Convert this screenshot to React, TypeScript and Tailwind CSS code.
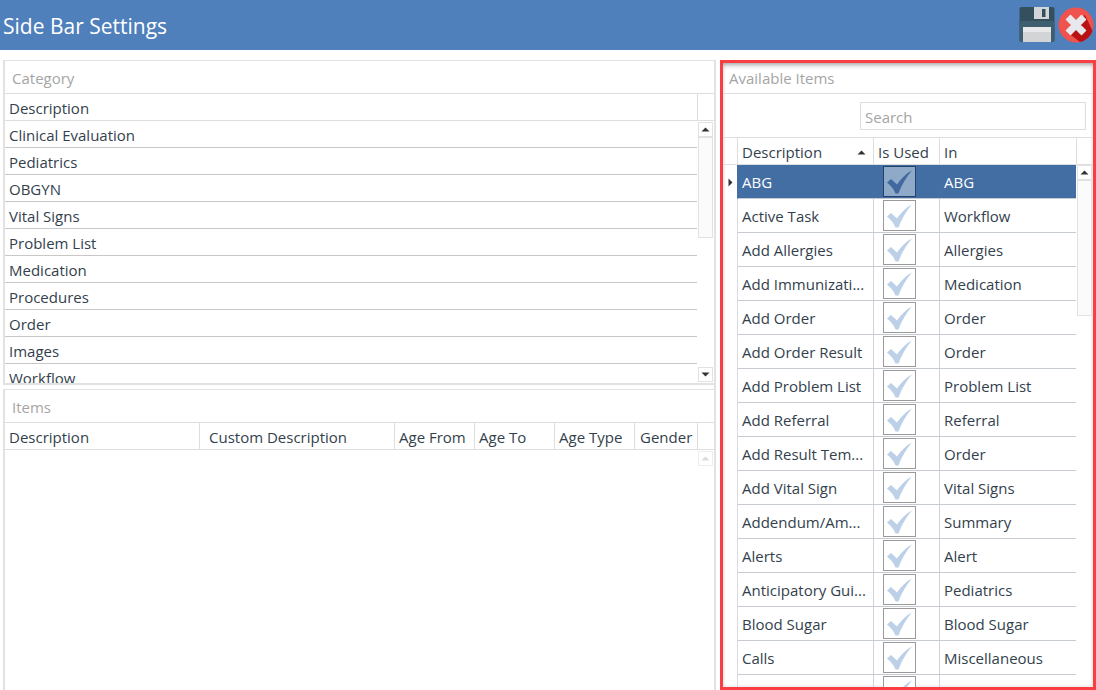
const categories = [
  'Clinical Evaluation',
  'Pediatrics',
  'OBGYN',
  'Vital Signs',
  'Problem List',
  'Medication',
  'Procedures',
  'Order',
  'Images',
  'Workflow',
]

const itemColumns = [
  { label: 'Description', width: 'w-[195px] pl-[4px]' },
  { label: 'Custom Description', width: 'w-[195px] pl-[9px]' },
  { label: 'Age From', width: 'w-[80px] pl-[4px]' },
  { label: 'Age To', width: 'w-[80px] pl-[4px]' },
  { label: 'Age Type', width: 'w-[80px] pl-[4px]' },
  { label: 'Gender', width: 'w-[63px] pl-[5px]' },
]

const available = [
  ['ABG', 'ABG'],
  ['Active Task', 'Workflow'],
  ['Add Allergies', 'Allergies'],
  ['Add Immunizati...', 'Medication'],
  ['Add Order', 'Order'],
  ['Add Order Result', 'Order'],
  ['Add Problem List', 'Problem List'],
  ['Add Referral', 'Referral'],
  ['Add Result Tem...', 'Order'],
  ['Add Vital Sign', 'Vital Signs'],
  ['Addendum/Am...', 'Summary'],
  ['Alerts', 'Alert'],
  ['Anticipatory Gui...', 'Pediatrics'],
  ['Blood Sugar', 'Blood Sugar'],
  ['Calls', 'Miscellaneous'],
  ['', ''],
]

function Arrow({ down, faded }: { down?: boolean; faded?: boolean }) {
  return (
    <svg width="9" height="5" viewBox="0 0 9 5">
      <path d={down ? 'M0.5 0.5H8.5L4.5 4.5Z' : 'M4.5 0.5L8.5 4.5H0.5Z'} fill={faded ? '#c4c4c4' : '#333333'} />
    </svg>
  )
}

function ScrollButton({ down, faded }: { down?: boolean; faded?: boolean }) {
  return (
    <div className="h-[15px] w-[15px] shrink-0 flex items-center justify-center bg-white border border-[#e2e2e2]">
      <Arrow down={down} faded={faded} />
    </div>
  )
}

function SaveIcon() {
  return (
    <svg width="36" height="36" viewBox="0 0 36 36">
      <rect x="0.5" y="0" width="35" height="35" rx="2" fill="#34505f" />
      <rect x="0.5" y="14" width="35" height="21" rx="2" fill="#3e5f70" />
      <rect x="15" y="0" width="15" height="12" fill="#d3d6d8" />
      <rect x="23" y="2" width="3.5" height="8" fill="#34505f" />
      <rect x="4" y="20" width="28" height="15" fill="#d2d4d5" />
      <rect x="4" y="20" width="28" height="5" fill="#e6e8e9" />
    </svg>
  )
}

function CloseIcon() {
  return (
    <svg width="36" height="36" viewBox="0 0 36 36">
      <circle cx="18" cy="18" r="17.5" fill="#f0524e" />
      <path d="M27 8L34.5 24A17.5 17.5 0 0 1 22 35L9 25Z" fill="#b81212" />
      <path
        d="M12.5 8.5L18 14L23.5 8.5L27.5 12.5L22 18L27.5 23.5L23.5 27.5L18 22L12.5 27.5L8.5 23.5L14 18L8.5 12.5Z"
        fill="#e6e8ee"
        stroke="#e6e8ee"
        strokeWidth="1.5"
        strokeLinejoin="round"
      />
    </svg>
  )
}

function CheckBox({ selected }: { selected: boolean }) {
  return (
    <div
      className={`w-[33px] h-[31px] flex items-center justify-center border ${
        selected ? 'bg-[#8fa9c9] border-[#24426b]' : 'bg-white border-[#9a9a9a]'
      }`}
    >
      <svg width="25" height="24" viewBox="0 0 25 24">
        <path
          d="M0 12.5L4 9L10 14.5C14 8.5 19 3.5 25 0.5C19 7.5 14.5 15 11.5 23.5H8.5C6.5 18.5 3.5 15.5 0 12.5Z"
          fill={selected ? '#41699f' : '#bcd0e8'}
        />
      </svg>
    </div>
  )
}

export default function App() {
  return (
    <div
      className="w-[1096px] h-[690px] overflow-hidden bg-white text-[#333f4d] text-[15px]"
      style={{ fontFamily: '"Open Sans", "Noto Sans", sans-serif' }}
    >
      <div className="h-[50px] bg-[#4f80bc] flex items-center justify-between pl-[3px] pr-[2px]">
        <h1 className="text-[21px] text-white pt-[3px]">Side Bar Settings</h1>
        <div className="flex items-center gap-[3px] pb-[1px]">
          <SaveIcon />
          <CloseIcon />
        </div>
      </div>

      <div className="flex pt-[10px] pl-[3px]">
        {/* left side */}
        <div className="w-[713px] shrink-0 flex flex-col gap-[4px] border-r-2 border-[#e2e2e2]">
          <section className="h-[325px] border-2 border-[#e2e2e2] border-r-0 border-t-[1px] overflow-hidden flex flex-col">
            <div className="h-[33px] shrink-0 pl-[7px] pt-[2px] flex items-center text-[#a5a5a5] border-b border-[#dedede]">Category</div>
            <div className="h-[27px] shrink-0 flex border-b border-[#dedede]">
              <div className="w-[693px] pl-[4px] pt-[2px] flex items-center border-r border-[#dedede]">Description</div>
            </div>
            <div className="flex flex-1 min-h-0">
              <div className="w-[692px] shrink-0 overflow-hidden">
                {categories.map((name) => (
                  <div key={name} className="h-[27px] pl-[4px] pt-[2px] flex items-center border-b border-[#c8c8c8]">
                    {name}
                  </div>
                ))}
              </div>
              <div className="w-[15px] ml-[1px] pt-[1px] pb-[1px] flex flex-col">
                <ScrollButton />
                <div className="h-[101px] shrink-0 bg-[#fbfbfb] border border-[#e2e2e2]" />
                <div className="flex-1" />
                <ScrollButton down />
              </div>
            </div>
          </section>

          <section className="flex-1 h-[301px] border-2 border-b-0 border-r-0 border-t-[1px] border-[#e2e2e2] flex flex-col">
            <div className="h-[33px] shrink-0 pl-[7px] pt-[2px] flex items-center text-[#a5a5a5] border-b border-[#dedede]">Items</div>
            <div className="h-[27px] shrink-0 flex border-b border-[#dedede]">
              {itemColumns.map((col) => (
                <div key={col.label} className={`${col.width} shrink-0 pt-[2px] flex items-center border-r border-[#dedede]`}>
                  {col.label}
                </div>
              ))}
            </div>
            <div className="flex justify-end pt-[1px] pr-[1px]">
              <div className="opacity-60">
                <ScrollButton faded />
              </div>
            </div>
          </section>
        </div>

        {/* available items, outlined in red in the picture */}
        <section className="ml-[4px] w-[376px] h-[630px] border-[3px] border-[#fb3e44] overflow-hidden flex flex-col shadow-[inset_0_5px_5px_-3px_rgba(0,0,0,0.3),inset_0_0_4px_rgba(0,0,0,0.15)]">
          <div className="h-[31px] shrink-0 pl-[6px] flex items-center text-[#a5a5a5] border-b border-[#dedede]">Available Items</div>
          <div className="h-[43px] shrink-0 flex items-center justify-end pr-[7px] pt-[1px]">
            <div className="w-[226px] h-[28px] pl-[4px] pt-[2px] flex items-center text-[#a5a5a5] border border-[#dedede]">Search</div>
          </div>
          <div className="h-[28px] shrink-0 flex border-y border-[#dedede]">
            <div className="w-[15px] shrink-0 border-r border-[#dedede]" />
            <div className="w-[136px] shrink-0 pl-[4px] pr-[7px] pt-[2px] flex items-center justify-between border-r border-[#dedede]">
              Description
              <Arrow />
            </div>
            <div className="w-[66px] shrink-0 pl-[4px] pt-[2px] flex items-center border-r border-[#dedede]">Is Used</div>
            <div className="w-[137px] shrink-0 pl-[4px] pt-[2px] flex items-center border-r border-[#dedede]">In</div>
          </div>
          <div className="flex flex-1 min-h-0">
            <div className="w-[353px] shrink-0 overflow-hidden">
              {available.map(([name, where], i) => {
                const selected = i === 0
                return (
                  <div key={i} className="h-[34px] flex">
                    <div className="w-[14px] shrink-0 flex items-center justify-center">
                      {selected && (
                        <svg width="5" height="9" viewBox="0 0 5 9">
                          <path d="M0.5 0.5L4.5 4.5L0.5 8.5Z" fill="#333333" />
                        </svg>
                      )}
                    </div>
                    <div
                      className={`flex flex-1 border-b border-l ${
                        selected ? 'bg-[#436ea3] text-white border-[#c6cbd2] border-l-[#436ea3]' : 'border-[#c6cbd2] border-l-[#d8dce2]'
                      }`}
                    >
                      <div
                        className={`w-[136px] shrink-0 pl-[4px] pt-[2px] flex items-center whitespace-nowrap ${
                          selected ? '' : 'border-r border-[#d0d4da]'
                        }`}
                      >
                        {name}
                      </div>
                      <div
                        className={`w-[66px] shrink-0 flex items-center pl-[9px] ${selected ? '' : 'border-r border-[#d0d4da]'}`}
                      >
                        <CheckBox selected={selected} />
                      </div>
                      <div className="flex-1 pl-[4px] pt-[2px] flex items-center whitespace-nowrap">{where}</div>
                    </div>
                  </div>
                )
              })}
            </div>
            <div className="w-[15px] ml-[1px] shrink-0 flex flex-col">
              <ScrollButton />
              <div className="h-[136px] shrink-0 bg-[#fbfbfb] border border-[#e2e2e2]" />
            </div>
          </div>
        </section>
      </div>
    </div>
  )
}
